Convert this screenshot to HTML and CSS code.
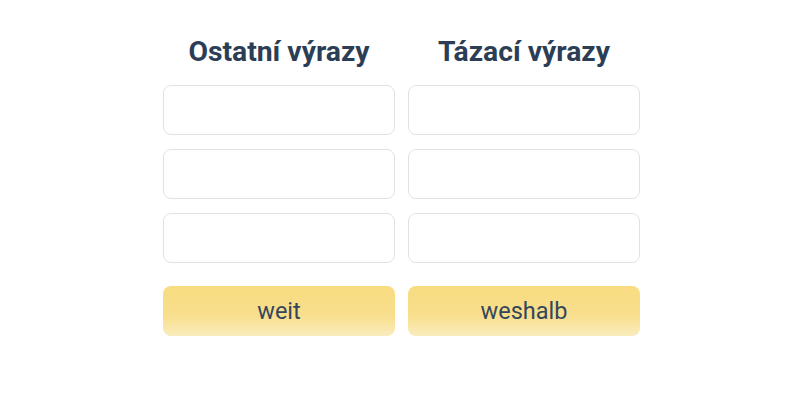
FILE: index.html
```html
<!DOCTYPE html>
<html>
<head>
<meta charset="utf-8">
<link rel="stylesheet" href="styles.css">
</head>
<body>
<div class="board">
  <div class="column">
    <h2 class="title">Ostatní výrazy</h2>
    <div class="slot"></div>
    <div class="slot"></div>
    <div class="slot"></div>
    <div class="word">weit</div>
  </div>
  <div class="column">
    <h2 class="title">Tázací výrazy</h2>
    <div class="slot"></div>
    <div class="slot"></div>
    <div class="slot"></div>
    <div class="word">weshalb</div>
  </div>
</div>
</body>
</html>
```
FILE: styles.css
```css
html, body {
  margin: 0;
  padding: 0;
  background: #ffffff;
  font-family: Roboto, "Liberation Sans", sans-serif;
}
.board {
  display: grid;
  grid-template-columns: 232px 232px;
  column-gap: 13px;
  justify-content: center;
  padding-top: 33px;
  padding-left: 3px;
}
.column {
  display: flex;
  flex-direction: column;
  gap: 14px;
}
.title {
  margin: 0;
  height: 38px;
  line-height: 38px;
  font-size: 28.3px;
  font-weight: 700;
  color: #2c3e55;
  text-align: center;
}
.slot {
  box-sizing: border-box;
  height: 50px;
  border: 1.5px solid #dfe3e7;
  border-radius: 8px;
  background: #fff;
}
.word {
  box-sizing: border-box;
  height: 50px;
  margin-top: 9px;
  border-radius: 8px;
  background: linear-gradient(to bottom, #f8dc80 0%, #f8df8e 60%, #faecbd 100%);
  color: #34465c;
  font-size: 23.5px;
  display: flex;
  align-items: center;
  justify-content: center;
}
```
